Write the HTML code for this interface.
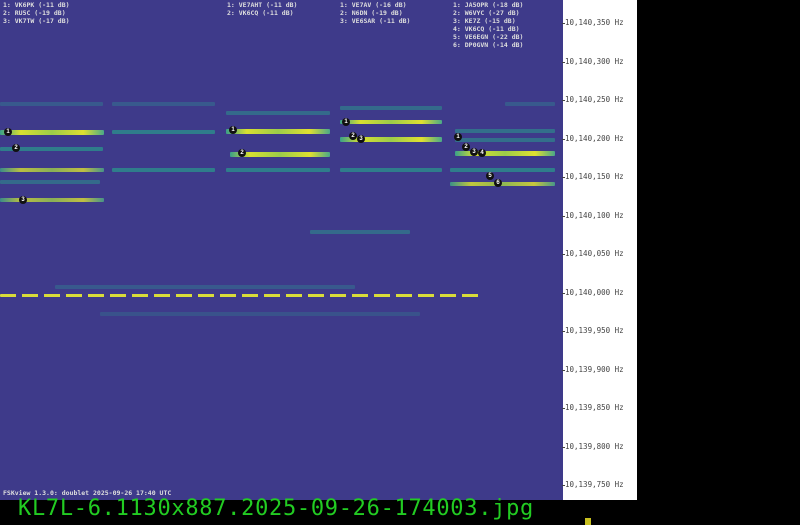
<!DOCTYPE html>
<html><head><meta charset="utf-8"><style>
*{margin:0;padding:0}
body{width:800px;height:525px;background:#000;position:relative;overflow:hidden;font-family:"DejaVu Sans Mono","Liberation Mono",monospace}
#wf{position:absolute;left:0;top:0;width:563px;height:500px;background:#3e3a8a}
#ax{position:absolute;left:563px;top:0;width:74px;height:500px;background:#fff}
.hz{position:absolute;left:2px;font-size:7.5px;color:#444;white-space:nowrap}
.hz:before{content:"";position:absolute;left:-3px;top:5px;width:3px;height:1px;background:#444}
.t{position:absolute;height:4px;border-radius:1px}
.te{background:#2a9a8c;opacity:.7}
.tf{background:#2f8a90;opacity:.4}
.yg{background:linear-gradient(90deg,#3aa088,#d8e030 20%,#9ccc4a 50%,#e0e030 80%,#4aa888)}
.lb{position:absolute;font-size:6.5px;line-height:8px;color:#ddd;white-space:pre;font-weight:bold}
.m{position:absolute;width:8px;height:8px;border-radius:50%;background:#111;color:#fff;font-size:6px;line-height:8px;text-align:center;font-family:"Liberation Sans",sans-serif;font-weight:bold}
#fn{position:absolute;left:18px;top:496px;font-size:22px;color:#22cc22;letter-spacing:0.7px}
</style></head><body>
<div id="wf">
<div class="lb" style="left:3px;top:1px">1: VK6PK (-11 dB)
2: RU5C (-19 dB)
3: VK7TW (-17 dB)</div>
<div class="lb" style="left:227px;top:1px">1: VE7AHT (-11 dB)
2: VK6CQ (-11 dB)</div>
<div class="lb" style="left:340px;top:1px">1: VE7AV (-16 dB)
2: N6DN (-19 dB)
3: VE6SAR (-11 dB)</div>
<div class="lb" style="left:453px;top:1px">1: JA5OPR (-18 dB)
2: W6VYC (-27 dB)
3: KE7Z (-15 dB)
4: VK6CQ (-11 dB)
5: VE6EGN (-22 dB)
6: DP0GVN (-14 dB)</div>

<div class="t tf" style="left:0;top:102px;width:103px"></div>
<div class="t yg" style="left:0;top:130px;width:104px;height:5px"></div>
<div class="t te" style="left:0;top:147px;width:103px"></div>
<div class="t yg" style="left:0;top:168px;width:104px;opacity:.8"></div>
<div class="t te" style="left:0;top:180px;width:100px;opacity:.5"></div>
<div class="t yg" style="left:0;top:198px;width:104px;opacity:.8"></div>

<div class="t tf" style="left:112px;top:102px;width:103px"></div>
<div class="t te" style="left:112px;top:130px;width:103px"></div>
<div class="t te" style="left:112px;top:168px;width:103px"></div>

<div class="t te" style="left:226px;top:111px;width:104px;opacity:.5"></div>
<div class="t yg" style="left:226px;top:129px;width:104px;height:5px"></div>
<div class="t yg" style="left:230px;top:152px;width:100px;height:5px"></div>
<div class="t te" style="left:226px;top:168px;width:104px"></div>

<div class="t te" style="left:340px;top:106px;width:102px;opacity:.5"></div>
<div class="t yg" style="left:340px;top:120px;width:102px"></div>
<div class="t yg" style="left:340px;top:137px;width:102px;height:5px"></div>
<div class="t te" style="left:340px;top:168px;width:102px"></div>

<div class="t tf" style="left:505px;top:102px;width:50px"></div>
<div class="t te" style="left:455px;top:129px;width:100px;opacity:.55"></div>
<div class="t te" style="left:455px;top:138px;width:100px;opacity:.55"></div>
<div class="t yg" style="left:455px;top:151px;width:100px;height:5px"></div>
<div class="t te" style="left:450px;top:168px;width:105px"></div>
<div class="t yg" style="left:450px;top:182px;width:105px;opacity:.85"></div>

<div class="t te" style="left:310px;top:230px;width:100px;opacity:.5"></div>
<div class="t tf" style="left:55px;top:285px;width:300px"></div>
<div class="t" style="left:0;top:294px;width:480px;height:3px;background:repeating-linear-gradient(90deg,#d8dc3a 0 16px,transparent 16px 22px)"></div>
<div class="t tf" style="left:100px;top:312px;width:320px;opacity:.3"></div>

<div class="m" style="left:4px;top:128px">1</div>
<div class="m" style="left:12px;top:144px">2</div>
<div class="m" style="left:19px;top:196px">3</div>
<div class="m" style="left:229px;top:126px">1</div>
<div class="m" style="left:238px;top:149px">2</div>
<div class="m" style="left:342px;top:118px">1</div>
<div class="m" style="left:349px;top:132px">2</div>
<div class="m" style="left:357px;top:135px">3</div>
<div class="m" style="left:454px;top:133px">1</div>
<div class="m" style="left:462px;top:143px">2</div>
<div class="m" style="left:470px;top:148px">3</div>
<div class="m" style="left:478px;top:149px">4</div>
<div class="m" style="left:486px;top:172px">5</div>
<div class="m" style="left:494px;top:179px">6</div>

<div class="lb" style="left:3px;top:489px">FSKview 1.3.0: doublet 2025-09-26 17:40 UTC</div>
</div>
<div id="ax">
<div class="hz" style="top:18px">10,140,350 Hz</div>
<div class="hz" style="top:57px">10,140,300 Hz</div>
<div class="hz" style="top:95px">10,140,250 Hz</div>
<div class="hz" style="top:134px">10,140,200 Hz</div>
<div class="hz" style="top:172px">10,140,150 Hz</div>
<div class="hz" style="top:211px">10,140,100 Hz</div>
<div class="hz" style="top:249px">10,140,050 Hz</div>
<div class="hz" style="top:288px">10,140,000 Hz</div>
<div class="hz" style="top:326px">10,139,950 Hz</div>
<div class="hz" style="top:365px">10,139,900 Hz</div>
<div class="hz" style="top:403px">10,139,850 Hz</div>
<div class="hz" style="top:442px">10,139,800 Hz</div>
<div class="hz" style="top:480px">10,139,750 Hz</div>
</div>
<div id="fn">KL7L-6.1130x887.2025-09-26-174003.jpg</div>
<div style="position:absolute;left:585px;top:518px;width:6px;height:7px;background:#c8c020"></div>
</body></html>
